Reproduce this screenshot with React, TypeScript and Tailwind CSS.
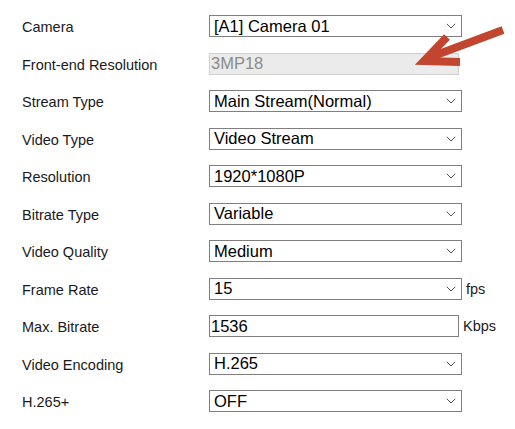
type Field = {
  label: string;
  value: string;
  kind: 'select' | 'input' | 'disabled';
  unit?: string;
};

const fields: Field[] = [
  { label: 'Camera', value: '[A1] Camera 01', kind: 'select' },
  { label: 'Front-end Resolution', value: '3MP18', kind: 'disabled' },
  { label: 'Stream Type', value: 'Main Stream(Normal)', kind: 'select' },
  { label: 'Video Type', value: 'Video Stream', kind: 'select' },
  { label: 'Resolution', value: '1920*1080P', kind: 'select' },
  { label: 'Bitrate Type', value: 'Variable', kind: 'select' },
  { label: 'Video Quality', value: 'Medium', kind: 'select' },
  { label: 'Frame Rate', value: '15', kind: 'select', unit: 'fps' },
  { label: 'Max. Bitrate', value: '1536', kind: 'input', unit: 'Kbps' },
  { label: 'Video Encoding', value: 'H.265', kind: 'select' },
  { label: 'H.265+', value: 'OFF', kind: 'select' },
];

function Chevron() {
  return (
    <svg width="10" height="6" viewBox="0 0 10 6" className="shrink-0">
      <path d="M0.8 0.8 L5 5 L9.2 0.8" fill="none" stroke="#555" strokeWidth="1" />
    </svg>
  );
}

function Control({ field }: { field: Field }) {
  if (field.kind === 'select') {
    return (
      <div className="flex h-[22px] w-[253px] items-center justify-between border border-[#7f7f7f] bg-white pl-[4px] pr-[5px] text-[16.5px] text-black">
        <span className="leading-none">{field.value}</span>
        <Chevron />
      </div>
    );
  }
  if (field.kind === 'disabled') {
    return (
      <div className="flex h-[22px] w-[250px] items-center border border-[#d0d0d0] bg-[#ebebeb] pl-[1px] text-[16.5px] text-[#8a8a8a]">
        <span className="leading-none">{field.value}</span>
      </div>
    );
  }
  return (
    <div className="flex h-[22px] w-[250px] items-center border border-[#7f7f7f] bg-white pl-[1px] text-[16.5px] text-black">
      <span className="leading-none">{field.value}</span>
    </div>
  );
}

function Arrow() {
  return (
    <svg className="pointer-events-none absolute left-0 top-0" width="515" height="429" viewBox="0 0 515 429">
      <g stroke="#c1452f" strokeWidth="8" fill="none" strokeLinejoin="miter" strokeLinecap="butt">
        <line x1="503" y1="30" x2="428" y2="58" />
        <polyline points="447,37 424,61 460,62" />
      </g>
    </svg>
  );
}

export default function App() {
  return (
    <div className="relative h-[429px] w-[515px] overflow-hidden bg-white font-['Liberation_Sans',Arial,sans-serif]">
      <div className="flex flex-col pl-[22px] pt-[7.25px]">
        {fields.map((f) => (
          <div key={f.label} className="flex h-[37.5px] items-center">
            <div className="w-[187px] translate-y-[1.5px] text-[14.5px] text-[#1a1a1a]">{f.label}</div>
            <Control field={f} />
            {f.unit && (
              <span className="ml-[4px] translate-y-[1px] text-[14.5px] text-[#1a1a1a]">{f.unit}</span>
            )}
          </div>
        ))}
      </div>
      <Arrow />
    </div>
  );
}
